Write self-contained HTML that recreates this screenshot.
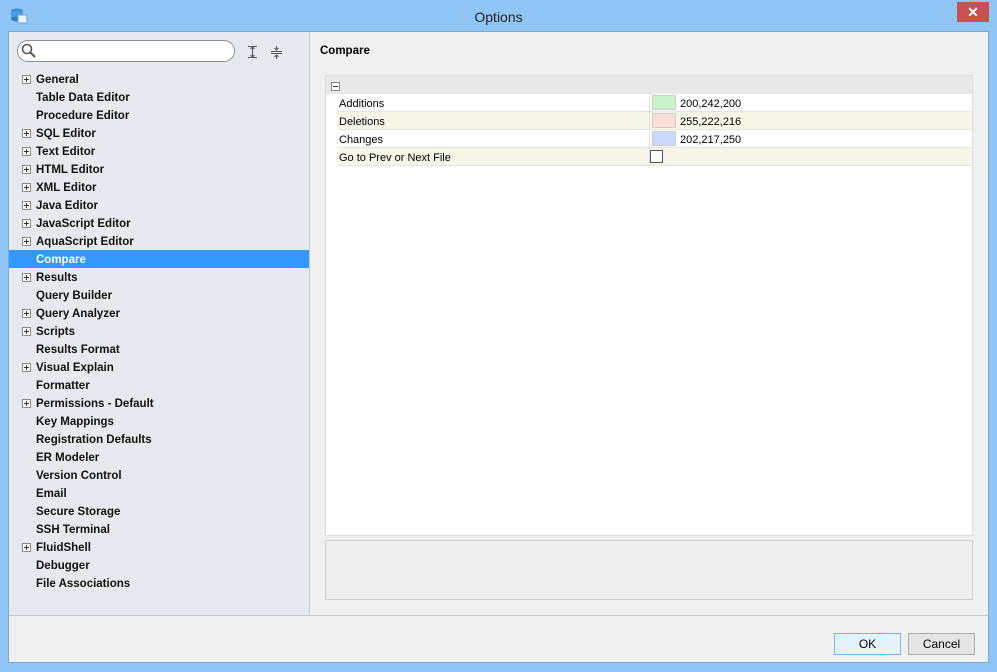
<!DOCTYPE html>
<html><head><meta charset="utf-8"><style>
*{margin:0;padding:0;box-sizing:border-box}
body{width:997px;height:672px;background:#8fc6f5;position:relative;overflow:hidden;font-family:"Liberation Sans",sans-serif;font-size:11px;color:#000}
.abs{position:absolute}
.title{left:0;top:0;width:997px;height:31px;text-align:center;line-height:34px;font-family:"Liberation Sans",sans-serif;font-size:14px;color:#222}
.close{left:957px;top:2px;width:32px;height:20px;background:#c75050;color:#fff;text-align:center;font-size:14px;line-height:20px;font-weight:bold}
.client{left:8px;top:31px;width:981px;height:632px;background:#f0f0f0;border:1px solid #7fa9d0}
.left{left:9px;top:32px;width:301px;height:584px;background:#e6eaee;border-right:1px solid #c8c8c8}
.item{position:absolute;left:0;width:300px;height:18px;line-height:20px;font-weight:bold;font-size:11.5px;padding-left:27px;color:#111}
.item.sel{background:#3399ff;color:#fff}
.pl{position:absolute;left:13px;top:5px;width:9px;height:9px;border:1px solid #8a8a8a;background:#fff}
.pl:before{content:"";position:absolute;left:1px;top:3px;width:5px;height:1px;background:#333}
.pl:after{content:"";position:absolute;left:3px;top:1px;width:1px;height:5px;background:#333}
.row{position:absolute;left:337px;width:635px;height:18px;border-bottom:1px solid #e4e4e4;font-size:11px;line-height:20px}
.row .n{position:absolute;left:2px}
.row .v{position:absolute;left:312px;top:0;height:18px;border-left:1px solid #e0e0e0;padding-left:30px}
.sw{position:absolute;left:2px;top:1px;width:24px;height:15px;border:1px solid #ccc}
.btn{top:633px;width:67px;height:22px;border:1px solid #adadad;background:#e5e5e5;text-align:center;line-height:20px;font-family:"Liberation Sans",sans-serif;font-size:12px}
</style></head><body>
<div class="abs title">Options</div>
<svg class="abs" style="left:10px;top:7px" width="18" height="17"><ellipse cx="7" cy="4" rx="6" ry="2.5" fill="#3a8fd8"/><rect x="1" y="4" width="12" height="8" fill="#4a9be0"/><ellipse cx="7" cy="12" rx="6" ry="2.5" fill="#2d7fc8"/><rect x="8" y="8" width="9" height="8" fill="#e8f2fb" stroke="#6aa8dd"/></svg>
<div class="abs close">✕</div>
<div class="abs client"></div>
<div class="abs left">
<div class="abs" style="left:8px;top:8px;width:218px;height:22px;border:1px solid #8e8e8e;border-radius:11px;background:#fff"></div>
<svg class="abs" style="left:12px;top:11px" width="16" height="16"><circle cx="6" cy="6" r="4.5" fill="none" stroke="#555" stroke-width="1.6"/><line x1="9.5" y1="9.5" x2="14" y2="14" stroke="#555" stroke-width="2"/></svg>
<svg class="abs" style="left:237px;top:13px" width="14" height="14"><path d="M2 1.5h9M2 12.5h9M6.5 2v10M4.5 4l2-2 2 2M4.5 10l2 2 2-2" stroke="#555" fill="none"/></svg>
<svg class="abs" style="left:261px;top:13px" width="14" height="14"><path d="M1 6.5h11M1 8.5h11M6.5 1v4M6.5 10v4M4.5 3l2 2 2-2M4.5 12l2-2 2 2" stroke="#555" fill="none"/></svg>
<div class="item" style="top:38px"><span class="pl"></span>General</div>
<div class="item" style="top:56px">Table Data Editor</div>
<div class="item" style="top:74px">Procedure Editor</div>
<div class="item" style="top:92px"><span class="pl"></span>SQL Editor</div>
<div class="item" style="top:110px"><span class="pl"></span>Text Editor</div>
<div class="item" style="top:128px"><span class="pl"></span>HTML Editor</div>
<div class="item" style="top:146px"><span class="pl"></span>XML Editor</div>
<div class="item" style="top:164px"><span class="pl"></span>Java Editor</div>
<div class="item" style="top:182px"><span class="pl"></span>JavaScript Editor</div>
<div class="item" style="top:200px"><span class="pl"></span>AquaScript Editor</div>
<div class="item sel" style="top:218px">Compare</div>
<div class="item" style="top:236px"><span class="pl"></span>Results</div>
<div class="item" style="top:254px">Query Builder</div>
<div class="item" style="top:272px"><span class="pl"></span>Query Analyzer</div>
<div class="item" style="top:290px"><span class="pl"></span>Scripts</div>
<div class="item" style="top:308px">Results Format</div>
<div class="item" style="top:326px"><span class="pl"></span>Visual Explain</div>
<div class="item" style="top:344px">Formatter</div>
<div class="item" style="top:362px"><span class="pl"></span>Permissions - Default</div>
<div class="item" style="top:380px">Key Mappings</div>
<div class="item" style="top:398px">Registration Defaults</div>
<div class="item" style="top:416px">ER Modeler</div>
<div class="item" style="top:434px">Version Control</div>
<div class="item" style="top:452px">Email</div>
<div class="item" style="top:470px">Secure Storage</div>
<div class="item" style="top:488px">SSH Terminal</div>
<div class="item" style="top:506px"><span class="pl"></span>FluidShell</div>
<div class="item" style="top:524px">Debugger</div>
<div class="item" style="top:542px">File Associations</div>
</div>
<div class="abs" style="left:320px;top:45px;font-weight:bold;font-size:11.5px">Compare</div>
<div class="abs" style="left:325px;top:75px;width:648px;height:461px;background:#fff;border:1px solid #dcdcdc"></div>
<div class="abs" style="left:326px;top:76px;width:646px;height:18px;background:#e8e8e8"></div>
<div class="abs" style="left:331px;top:82px;width:9px;height:9px;border:1px solid #8a8a8a;background:#fff"><div style="position:absolute;left:1px;top:3px;width:5px;height:1px;background:#333"></div></div>
<div class="row" style="top:94px;background:#fff"><span class="n">Additions</span><span class="v"><span class="sw" style="background:rgb(200,242,200)"></span>200,242,200</span></div>
<div class="row" style="top:112px;background:#f6f6e9"><span class="n">Deletions</span><span class="v"><span class="sw" style="background:rgb(255,222,216)"></span>255,222,216</span></div>
<div class="row" style="top:130px;background:#fff"><span class="n">Changes</span><span class="v"><span class="sw" style="background:rgb(202,217,250)"></span>202,217,250</span></div>
<div class="row" style="top:148px;background:#f6f6e9"><span class="n">Go to Prev or Next File</span><span class="v"><span class="sw" style="left:0;top:2px;width:13px;height:13px;border-color:#555;background:#fff"></span></span></div>
<div class="abs" style="left:325px;top:540px;width:648px;height:60px;border:1px solid #d0d0d0;background:#efefef"></div>
<div class="abs" style="left:9px;top:615px;width:979px;height:1px;background:#c8c8c8"></div>
<div class="abs btn" style="left:834px;border-color:#7eb4ea;background:#e5f1fb">OK</div>
<div class="abs btn" style="left:908px">Cancel</div>
</body></html>
